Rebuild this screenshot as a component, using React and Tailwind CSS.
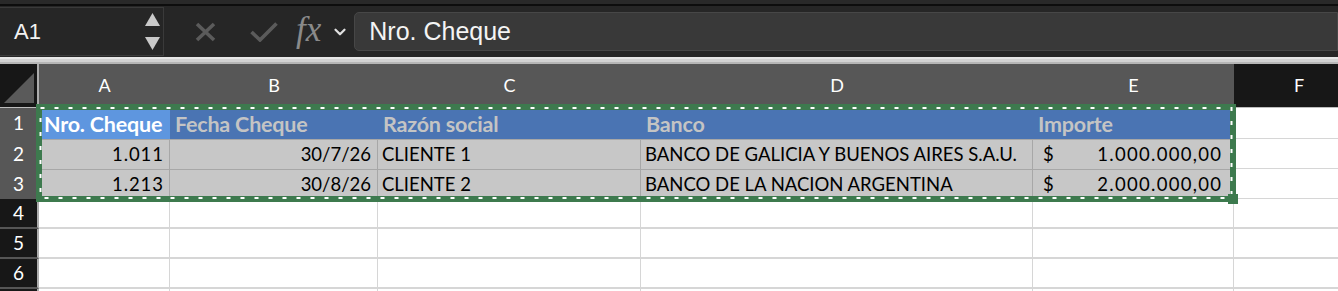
import { ChevronDown } from "lucide-react";

const cols = [
  { key: "A", w: "w-[131px]" },
  { key: "B", w: "w-[208px]" },
  { key: "C", w: "w-[263px]" },
  { key: "D", w: "w-[392px]" },
  { key: "E", w: "w-[201px]" },
];

const rows = [
  { n: 1, cells: ["Nro. Cheque", "Fecha Cheque", "Razón social", "Banco", "Importe"], header: true },
  { n: 2, cells: ["1.011", "30/7/26", "CLIENTE 1", "BANCO DE GALICIA Y BUENOS AIRES S.A.U.", "1.000.000,00"] },
  { n: 3, cells: ["1.213", "30/8/26", "CLIENTE 2", "BANCO DE LA NACION ARGENTINA", "2.000.000,00"] },
];

function Toolbar() {
  return (
    <div className="h-[51px] bg-[#262626] flex items-stretch">
      {/* name box */}
      <div className="w-[164px] my-[1px] border border-[#3a3a3a] border-l-0 flex items-center justify-between pl-[14px] pr-[3px]">
        <span className="font-['Liberation_Sans',sans-serif] text-[22px] text-[#f2f2f2] leading-none">A1</span>
        <div className="flex flex-col gap-[11px]">
          <svg width="15" height="13" viewBox="0 0 15 13"><path d="M7.5 0 L15 13 L0 13 Z" fill="#c9c9c9" /></svg>
          <svg width="15" height="13" viewBox="0 0 15 13"><path d="M0 0 L15 0 L7.5 13 Z" fill="#c9c9c9" /></svg>
        </div>
      </div>
      <div className="flex items-center pl-[31px]">
        <svg width="21" height="20" viewBox="0 0 21 20">
          <path d="M2 2 L19 18 M19 2 L2 18" stroke="#5b5b5b" strokeWidth="3.6" strokeLinecap="butt" />
        </svg>
        <svg className="ml-[34px]" width="28" height="20" viewBox="0 0 28 20">
          <path d="M1.5 10 L10 18 L26.5 1.5" stroke="#5b5b5b" strokeWidth="3.6" fill="none" />
        </svg>
        <span className="ml-[18px] font-['Liberation_Serif',serif] italic text-[35px] leading-none text-[#8a8a8a] -mt-[4px]">fx</span>
        <ChevronDown className="ml-[10px] text-[#e0e0e0]" size={18} strokeWidth={3} />
      </div>
      <div className="flex-1 ml-[5px] my-[6px] bg-[#393939] border border-[#474747] rounded-l-[5px] flex items-center pl-[14px]">
        <span className="font-['Liberation_Sans',sans-serif] text-[25px] text-[#f4f4f4] leading-none">Nro. Cheque</span>
      </div>
    </div>
  );
}

function HeaderRow() {
  return (
    <div className="flex h-[44px] border-b border-[#bdbdbd]">
      <div className="w-[39px] shrink-0 bg-[#171717] border-r-2 border-[#adadad] relative">
        <svg className="absolute left-[4px] top-[9px]" width="31" height="30" viewBox="0 0 31 30">
          <path d="M0 30 L30 0 L30 30 Z" fill="#5a5a5a" />
        </svg>
      </div>
      {cols.map((c) => (
        <div key={c.key} className={`${c.w} shrink-0 bg-[#575757] flex items-center justify-center text-[18px] text-white`}>
          {c.key}
        </div>
      ))}
      <div className="flex-1 bg-[#171717] flex items-center text-[18px] text-white pl-[60px]">F</div>
    </div>
  );
}

function DataRow({ row }) {
  const h = row.n === 1 ? "h-[31px]" : "h-[30px]";
  return (
    <div className={`flex ${h}`}>
      <div className="w-[39px] shrink-0 bg-[#575757] border-r-2 border-[#adadad] flex items-center justify-center text-[19px] text-white">
        {row.n}
      </div>
      {row.cells.map((v, i) => {
        const c = cols[i];
        if (row.header) {
          return (
            <div
              key={c.key}
              className={`${c.w} shrink-0 flex items-center pl-[5px] pt-[1px] font-bold text-[21.5px] tracking-[-0.2px] whitespace-nowrap ${
                i === 0 ? "bg-[#5e96df] text-white" : "bg-[#4a74b3] text-[#c4c4c4]"
              }`}
            >
              {v}
            </div>
          );
        }
        if (i === 4) {
          return (
            <div
              key={c.key}
              className={`${c.w} shrink-0 bg-[#c7c7c7] border-t border-r border-[#a7a7a7] flex items-center justify-between pl-[10px] pr-[12px] text-[18.5px] text-black`}
            >
              <span>$</span>
              <span className="tracking-[1.3px] -mr-[1.3px]">{v}</span>
            </div>
          );
        }
        const right = i < 2;
        return (
          <div
            key={c.key}
            className={`${c.w} shrink-0 bg-[#c7c7c7] border-t border-r border-[#a7a7a7] flex items-center text-[18.5px] text-black whitespace-nowrap ${
              right ? "justify-end pr-[6px]" : "pl-[4px]"
            }`}
          >
            {i === 0 ? <span className="tracking-[0.9px] -mr-[0.9px]">{v}</span> : v}
          </div>
        );
      })}
      <div className="flex-1 bg-white border-b border-[#d6d6d6]" />
    </div>
  );
}

function EmptyRow({ n }) {
  return (
    <div className="flex h-[30px]">
      <div className="w-[39px] shrink-0 bg-[#171717] border-r-2 border-[#adadad] border-b-2 border-b-[#555555] flex items-center justify-center text-[19px] text-white">
        {n}
      </div>
      {cols.map((c) => (
        <div key={c.key} className={`${c.w} shrink-0 bg-white border-r border-b-2 border-[#d6d6d6]`} />
      ))}
      <div className="flex-1 bg-white border-b-2 border-[#d6d6d6]" />
    </div>
  );
}

function Selection() {
  return (
    <div className="absolute left-[36px] top-[40px] w-[1200px] h-[98px] pointer-events-none">
      <svg width="1203" height="100" viewBox="0 0 1203 100" className="overflow-visible">
        <rect x="3" y="3" width="1194" height="92" fill="none" stroke="#3d7a4e" strokeWidth="6" />
        <rect x="4.5" y="4" width="1191" height="90" fill="none" stroke="#ffffff" strokeWidth="2" strokeDasharray="4 10" />
        <rect x="1192" y="90" width="10" height="10" fill="#3d7a4e" />
      </svg>
    </div>
  );
}

export default function App() {
  return (
    <div className="w-[1338px] h-[291px] overflow-hidden bg-white font-['Lato',sans-serif]">
      <div className="h-[4px] bg-[#292929]" />
      <div className="h-[2px] bg-[#0d0d0d]" />
      <Toolbar />
      <div className="h-[7px] bg-[#d2d2d2] border-t-2 border-[#e6e6e6] border-b-2 border-b-[#b6b6b6]" />
      <div className="relative">
        <HeaderRow />
        {rows.map((r) => (
          <DataRow key={r.n} row={r} />
        ))}
        {[4, 5, 6].map((n) => (
          <EmptyRow key={n} n={n} />
        ))}
        <EmptyRow n="" />
        <Selection />
      </div>
    </div>
  );
}
